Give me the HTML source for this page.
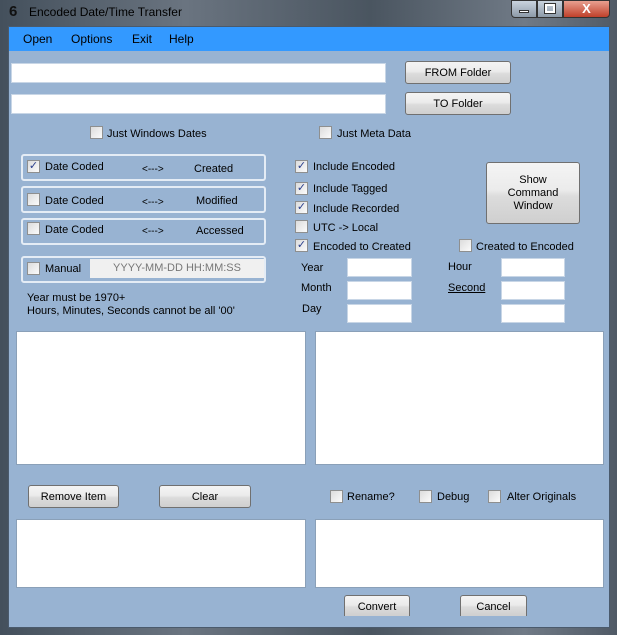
<!DOCTYPE html>
<html><head><style>
*{margin:0;padding:0;box-sizing:border-box}
body{width:617px;height:635px;overflow:hidden;background:#3a4450;font-family:"Liberation Sans",sans-serif;font-size:11px;color:#000;position:relative}
.a{position:absolute}
.frame{left:0;top:0;width:617px;height:635px;background:linear-gradient(90deg,#44505c,#6a7480 30%,#4a5560 60%,#707a86 85%,#505a66)}
.client{left:8px;top:26px;width:602px;height:602px;background:#98b3d2;border:1px solid #4a5a6c}
.menu{left:9px;top:27px;width:600px;height:24px;background:#3399ff}
.menu span{position:absolute;top:5px;font-size:12px}
.tb{background:#fff;border:1px solid #c8d6e6}
.btn{background:linear-gradient(#f4f4f4 0,#ebebeb 45%,#dcdcdc 55%,#cfcfcf 100%);border:1px solid #707070;border-radius:3px;text-align:center;font-size:11px}
.cb{width:13px;height:13px;border:1px solid #8e8f8f;background:linear-gradient(135deg,#dcdcdc,#fbfbfb);font-size:11px;line-height:11px;text-align:center;color:#2a3e8c}
.grp{border:2px solid #e4ecf5;border-radius:3px}
.t{white-space:nowrap;padding-top:2px}
.lb{background:#fff;border:1px solid #8aa0b8}
</style></head><body>
<div class="a frame"></div>
<div class="a" style="left:9px;top:3px;font-size:15px;font-weight:bold;color:#111">6</div>
<div class="a" style="left:29px;top:5px;font-size:12px;color:#000;white-space:nowrap">Encoded Date/Time Transfer</div>
<div class="a" style="left:511px;top:0;width:26px;height:18px;border:1px solid #333;border-radius:0 0 0 4px;background:linear-gradient(#c9d3de,#8d9aa8)"></div>
<div class="a" style="left:519px;top:10px;width:10px;height:3px;background:#fff;border:1px solid #333"></div>
<div class="a" style="left:537px;top:0;width:26px;height:18px;border:1px solid #333;background:linear-gradient(#c9d3de,#8d9aa8)"></div>
<div class="a" style="left:545px;top:4px;width:10px;height:9px;border:2px solid #fff;outline:1px solid #333"></div>
<div class="a" style="left:563px;top:0;width:47px;height:18px;border:1px solid #333;border-radius:0 0 4px 0;background:linear-gradient(#e8a090,#c0402a);color:#fff;font-weight:bold;text-align:center;font-size:13px;line-height:16px">X</div>
<div class="a client"></div>
<div class="a menu"><span style="left:14px">Open</span><span style="left:62px">Options</span><span style="left:123px">Exit</span><span style="left:160px">Help</span></div>

<div class="a tb" style="left:11px;top:63px;width:375px;height:20px"></div>
<div class="a btn" style="left:405px;top:61px;width:106px;height:23px;line-height:22px">FROM Folder</div>
<div class="a tb" style="left:11px;top:94px;width:375px;height:20px"></div>
<div class="a btn" style="left:405px;top:92px;width:106px;height:23px;line-height:22px">TO Folder</div>

<div class="a cb" style="left:90px;top:126px"></div><div class="a t" style="left:107px;top:126px">Just Windows Dates</div>
<div class="a cb" style="left:319px;top:126px"></div><div class="a t" style="left:337px;top:126px">Just Meta Data</div>

<div class="a grp" style="left:21px;top:154px;width:245px;height:27px"></div>
<div class="a cb" style="left:27px;top:160px">✓</div><div class="a t" style="left:45px;top:159px">Date Coded</div><div class="a t" style="left:142px;top:162px;font-size:10px">&lt;---&gt;</div><div class="a t" style="left:194px;top:161px">Created</div>
<div class="a grp" style="left:21px;top:186px;width:245px;height:27px"></div>
<div class="a cb" style="left:27px;top:193px"></div><div class="a t" style="left:45px;top:193px">Date Coded</div><div class="a t" style="left:142px;top:195px;font-size:10px">&lt;---&gt;</div><div class="a t" style="left:196px;top:193px">Modified</div>
<div class="a grp" style="left:21px;top:218px;width:245px;height:27px"></div>
<div class="a cb" style="left:27px;top:222px"></div><div class="a t" style="left:45px;top:222px">Date Coded</div><div class="a t" style="left:142px;top:224px;font-size:10px">&lt;---&gt;</div><div class="a t" style="left:196px;top:223px">Accessed</div>
<div class="a grp" style="left:21px;top:256px;width:245px;height:27px"></div>
<div class="a cb" style="left:27px;top:262px"></div><div class="a t" style="left:45px;top:261px">Manual</div>
<div class="a" style="left:90px;top:259px;width:174px;height:19px;background:#f0f0f0;color:#777;text-align:center;line-height:19px">YYYY-MM-DD HH:MM:SS</div>
<div class="a t" style="left:27px;top:290px">Year must be 1970+</div>
<div class="a t" style="left:27px;top:303px">Hours, Minutes, Seconds cannot be all '00'</div>

<div class="a cb" style="left:295px;top:160px">✓</div><div class="a t" style="left:313px;top:159px">Include Encoded</div>
<div class="a cb" style="left:295px;top:182px">✓</div><div class="a t" style="left:313px;top:181px">Include Tagged</div>
<div class="a cb" style="left:295px;top:201px">✓</div><div class="a t" style="left:313px;top:201px">Include Recorded</div>
<div class="a cb" style="left:295px;top:220px"></div><div class="a t" style="left:313px;top:220px">UTC -&gt; Local</div>
<div class="a cb" style="left:295px;top:239px">✓</div><div class="a t" style="left:313px;top:239px">Encoded to Created</div>
<div class="a cb" style="left:459px;top:239px"></div><div class="a t" style="left:476px;top:239px">Created to Encoded</div>
<div class="a btn" style="left:486px;top:162px;width:94px;height:62px;padding-top:11px;line-height:13px">Show<br>Command<br>Window</div>

<div class="a t" style="left:301px;top:260px">Year</div><div class="a tb" style="left:347px;top:258px;width:65px;height:19px"></div>
<div class="a t" style="left:301px;top:280px">Month</div><div class="a tb" style="left:347px;top:281px;width:65px;height:19px"></div>
<div class="a t" style="left:302px;top:301px">Day</div><div class="a tb" style="left:347px;top:304px;width:65px;height:19px"></div>
<div class="a t" style="left:448px;top:259px">Hour</div><div class="a tb" style="left:501px;top:258px;width:64px;height:19px"></div>
<div class="a t" style="left:448px;top:280px;text-decoration:underline">Second</div><div class="a tb" style="left:501px;top:281px;width:64px;height:19px"></div>
<div class="a tb" style="left:501px;top:304px;width:64px;height:19px"></div>

<div class="a lb" style="left:16px;top:331px;width:290px;height:134px"></div>
<div class="a lb" style="left:315px;top:331px;width:289px;height:134px"></div>

<div class="a btn" style="left:28px;top:485px;width:91px;height:23px;line-height:22px">Remove Item</div>
<div class="a btn" style="left:159px;top:485px;width:92px;height:23px;line-height:22px">Clear</div>
<div class="a cb" style="left:330px;top:490px"></div><div class="a t" style="left:347px;top:489px">Rename?</div>
<div class="a cb" style="left:419px;top:490px"></div><div class="a t" style="left:437px;top:489px">Debug</div>
<div class="a cb" style="left:488px;top:490px"></div><div class="a t" style="left:507px;top:489px">Alter Originals</div>

<div class="a lb" style="left:16px;top:519px;width:290px;height:69px"></div>
<div class="a lb" style="left:315px;top:519px;width:289px;height:69px"></div>

<div class="a btn" style="left:344px;top:595px;width:66px;height:21px;line-height:22px;border-bottom:none;border-radius:3px 3px 0 0">Convert</div>
<div class="a btn" style="left:460px;top:595px;width:67px;height:21px;line-height:22px;border-bottom:none;border-radius:3px 3px 0 0">Cancel</div>
</body></html>
